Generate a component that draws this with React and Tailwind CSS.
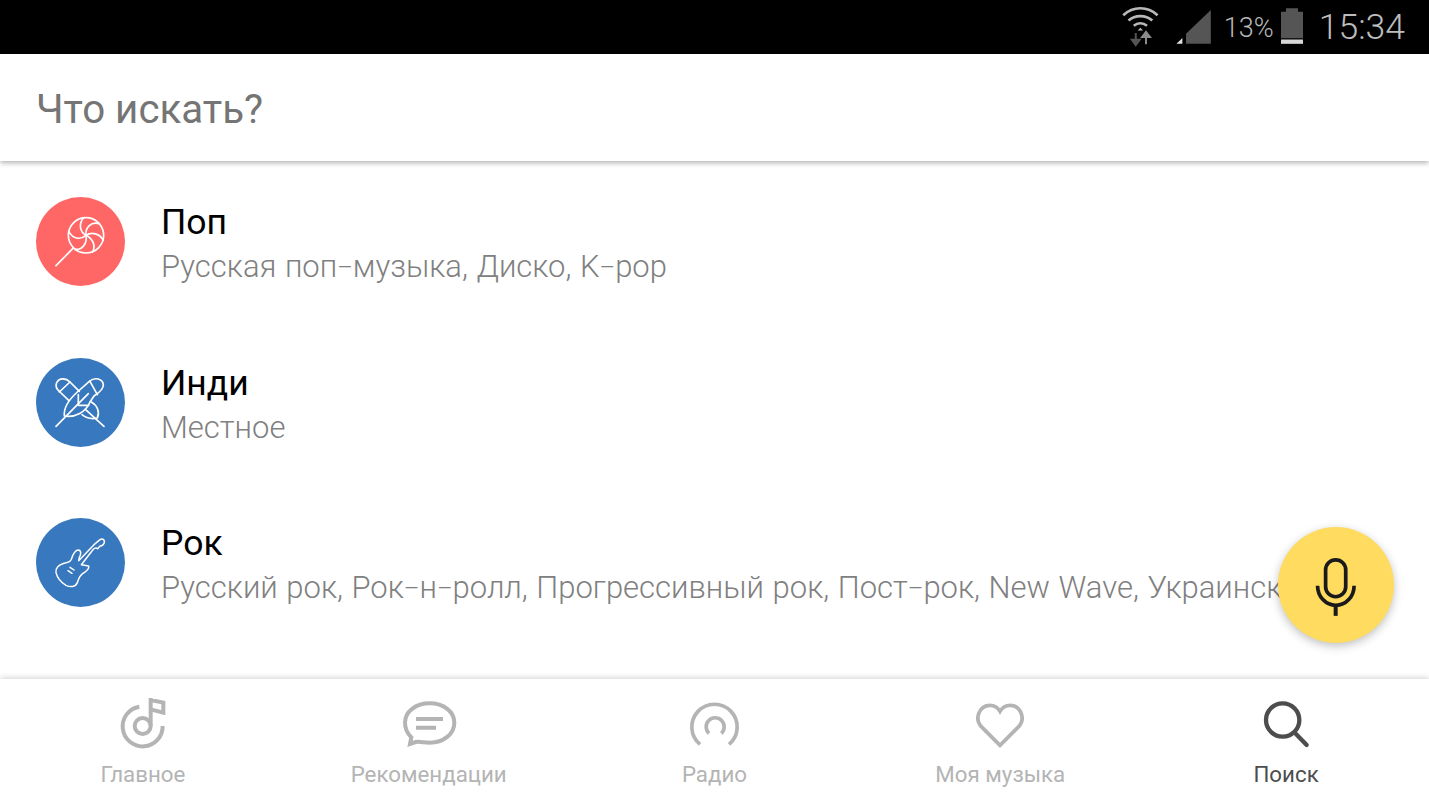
const Lollipop = () => (
  <svg viewBox="48 35 267 267" className="w-full h-full" fill="none" stroke="#fff" strokeWidth="5" strokeLinecap="round">
    <circle cx="198" cy="150" r="53" />
    <path d="M108 241L158 190" />
    <path d="M198 150C180 140 175 118 190 98" />
    <path d="M198 150C195 128 212 108 238 115" />
    <path d="M198 150C215 138 240 145 250 165" />
    <path d="M198 150C218 160 228 180 218 200" />
    <path d="M198 150C202 172 188 195 165 192" />
    <path d="M198 150C180 165 158 160 146 138" />
  </svg>
);

const Feathers = () => (
  <svg viewBox="48 38 267 267" className="w-full h-full" fill="none" stroke="#fff" strokeWidth="5" strokeLinecap="round" strokeLinejoin="round">
    <path d="M133 212C130 185 150 160 172 140L208 108C225 94 248 100 250 118C251 132 238 142 222 152L210 170C198 200 165 218 133 212Z" />
    <path d="M108 243L205 145" />
    <path d="M175 148V180H206" />
    <path d="M210 108L232 148" />
    <path d="M178 138L150 110C138 98 118 96 110 112C105 124 112 134 120 140L146 165" />
    <path d="M150 110L118 140" />
    <path d="M214 170C232 180 240 200 232 218C215 222 198 218 186 208" />
    <path d="M196 192L252 243" />
  </svg>
);

const Guitar = () => (
  <svg viewBox="48 38 267 267" className="w-full h-full" fill="none" stroke="#fff" strokeWidth="4.5" strokeLinecap="round" strokeLinejoin="round">
    <path d="M176 166L222 118L240 103C250 98 256 106 252 114C249 120 244 122 240 122L233 130C228 126 224 128 220 132L184 178L206 182C209 192 198 198 192 202C178 210 176 220 172 232C166 246 150 246 138 240C124 232 112 218 108 202C106 186 118 178 132 174C142 172 150 172 154 162C158 150 162 136 174 134C184 134 184 146 178 156Z" />
    <path d="M144 196L156 204M150 186L162 194" />
  </svg>
);

const NavHome = () => (
  <svg viewBox="99 75 180 165" className="w-[60px] h-[55px]" fill="none" stroke="#b4b4b4" strokeWidth="12">
    <path d="M178 110A60 60 0 1 0 248 168" />
    <circle cx="188" cy="168" r="24" />
    <path d="M212 168L212 84M212 90L250 98L250 128L212 118" />
  </svg>
);

const NavChat = () => (
  <svg viewBox="954 75 180 165" className="w-[60px] h-[55px]" fill="none" stroke="#b4b4b4" strokeWidth="12" strokeLinejoin="miter">
    <path d="M1046 100C1088 100 1120 125 1120 158C1120 192 1088 218 1046 218C1030 218 1016 214 1004 216L987 222L991 202C979 190 972 174 972 158C972 125 1004 100 1046 100Z" />
    <path d="M1005 147L1086 147M1005 173L1065 173" />
  </svg>
);

const NavRadio = () => (
  <svg viewBox="102 75 180 165" className="w-[60px] h-[55px]" fill="none" stroke="#b4b4b4" strokeWidth="11">
    <path d="M150 223A68 68 0 1 1 237 223" />
    <path d="M177 190A27 27 0 1 1 214 190" />
  </svg>
);

const NavHeart = () => (
  <svg viewBox="960 75 180 165" className="w-[60px] h-[55px]" fill="none" stroke="#b4b4b4" strokeWidth="11">
    <path d="M1050 226L994 170C972 146 988 106 1020 106C1034 106 1044 114 1050 124C1056 114 1066 106 1080 106C1112 106 1128 146 1106 170Z" />
  </svg>
);

const NavSearch = () => (
  <svg viewBox="168 75 180 165" className="w-[60px] h-[55px]" fill="none" stroke="#4d4d4d" strokeWidth="13" strokeLinecap="round">
    <circle cx="248" cy="150" r="50" />
    <path d="M288 192L320 225" />
  </svg>
);

const StatusIcons = () => (
  <svg viewBox="60 10 290 130" className="w-[97px] h-[43px] mr-[7px] -mt-[4px]" fill="none">
    <path d="M68 44C98 16 142 16 172 44" stroke="#b8b8b8" strokeWidth="8" />
    <path d="M84 60C104 42 136 42 156 60" stroke="#b8b8b8" strokeWidth="8" />
    <path d="M100 76C112 66 128 66 140 76" stroke="#b8b8b8" strokeWidth="8" />
    <path d="M112 90L120 82L128 90Z" fill="#b8b8b8" />
    <path d="M106 98L106 122M94 118L106 134L118 118Z" fill="#555" stroke="#555" strokeWidth="6" />
    <path d="M137 132L137 106M125 110L137 94L149 110Z" fill="#8a8a8a" stroke="#8a8a8a" strokeWidth="6" />
    <path d="M229 130L247 113L247 130Z" fill="#e0e0e0" />
    <path d="M258 130L258 100L333 28L333 130Z" fill="#555" />
  </svg>
);

const Battery = () => (
  <svg viewBox="545 24 66 107" className="w-[22px] h-[36px] mr-[16px] -mt-[2px]">
    <path d="M560 24H596V35H611V114H545V35H560Z" fill="#555" />
    <path d="M545 118H611V131H545Z" fill="#d8d8d8" />
  </svg>
);

const rows = [
  { title: "Поп", sub: "Русская поп–музыка, Диско, K–pop", color: "bg-[#ff6666]", Icon: Lollipop },
  { title: "Инди", sub: "Местное", color: "bg-[#3878be]", Icon: Feathers },
  { title: "Рок", sub: "Русский рок, Рок–н–ролл, Прогрессивный рок, Пост–рок, New Wave, Украинский рок", color: "bg-[#3878be]", Icon: Guitar },
];

const nav = [
  { label: "Главное", Icon: NavHome },
  { label: "Рекомендации", Icon: NavChat },
  { label: "Радио", Icon: NavRadio },
  { label: "Моя музыка", Icon: NavHeart },
  { label: "Поиск", Icon: NavSearch, active: true },
];

const Sub = ({ text }) => (
  <>
    {text.split("–").map((part, i) => (
      <span key={i}>
        {i > 0 && <span className="text-[24px] align-[2px]">–</span>}
        {part}
      </span>
    ))}
  </>
);

export default function App() {
  return (
    <div className="relative w-[1429px] h-[804px] overflow-hidden bg-white flex flex-col font-['Roboto',sans-serif]">
      <div className="h-[54px] bg-black flex items-center justify-end pr-[24px] shrink-0">
        <StatusIcons />
        <span className="text-[27px] leading-none text-[#b8b8b8] font-light mr-[7px] mt-[2px]">13%</span>
        <Battery />
        <span className="text-[35.5px] leading-none text-[#bdbdbd] font-light mt-[2px]">15:34</span>
      </div>
      <div className="h-[107px] bg-white flex items-center pl-[36px] shrink-0 shadow-[0_2px_5px_rgba(0,0,0,0.3)] z-10">
        <span className="text-[40.3px] leading-[48px] mt-[4px] text-[#757575]">Что искать?</span>
      </div>
      <div className="flex-1 flex flex-col pt-[36px] min-h-0">
        {rows.map(({ title, sub, color, Icon }) => (
          <div key={title} className="h-[160.67px] shrink-0 flex items-start pl-[36px]">
            <div className={`w-[89px] h-[89px] rounded-full shrink-0 ${color}`}>
              <Icon />
            </div>
            <div className="ml-[36px] w-[1130px] overflow-hidden">
              <div className="text-[35.5px] leading-[50px] text-black">{title}</div>
              <div className="text-[31px] leading-[40px] text-[#808080] font-light whitespace-nowrap [word-spacing:1px]"><Sub text={sub} /></div>
            </div>
          </div>
        ))}
      </div>
      <div className="h-[125px] bg-white flex shrink-0 pt-[16px] shadow-[0_-1px_6px_rgba(0,0,0,0.18)] z-10">
        {nav.map(({ label, Icon, active }) => (
          <div key={label} className="flex-1 flex flex-col items-center">
            <Icon />
            <span className={`mt-[10px] text-[22.3px] leading-[28px] ${active ? "text-[#4d4d4d]" : "text-[#b4b4b4]"}`}>{label}</span>
          </div>
        ))}
      </div>
      <div className="absolute left-[1278px] top-[527px] w-[116px] h-[116px] rounded-full bg-[#ffdb60] shadow-[0_3px_10px_rgba(0,0,0,0.25)] z-20">
        <svg viewBox="113 52 346 346" className="w-full h-full" fill="none" stroke="#1a1a1a" strokeWidth="11">
          <rect x="255" y="150" width="60" height="110" rx="30" />
          <path d="M231 227A54 58 0 0 0 340 227" />
          <path d="M285 285L285 317" strokeWidth="12" />
        </svg>
      </div>
    </div>
  );
}
